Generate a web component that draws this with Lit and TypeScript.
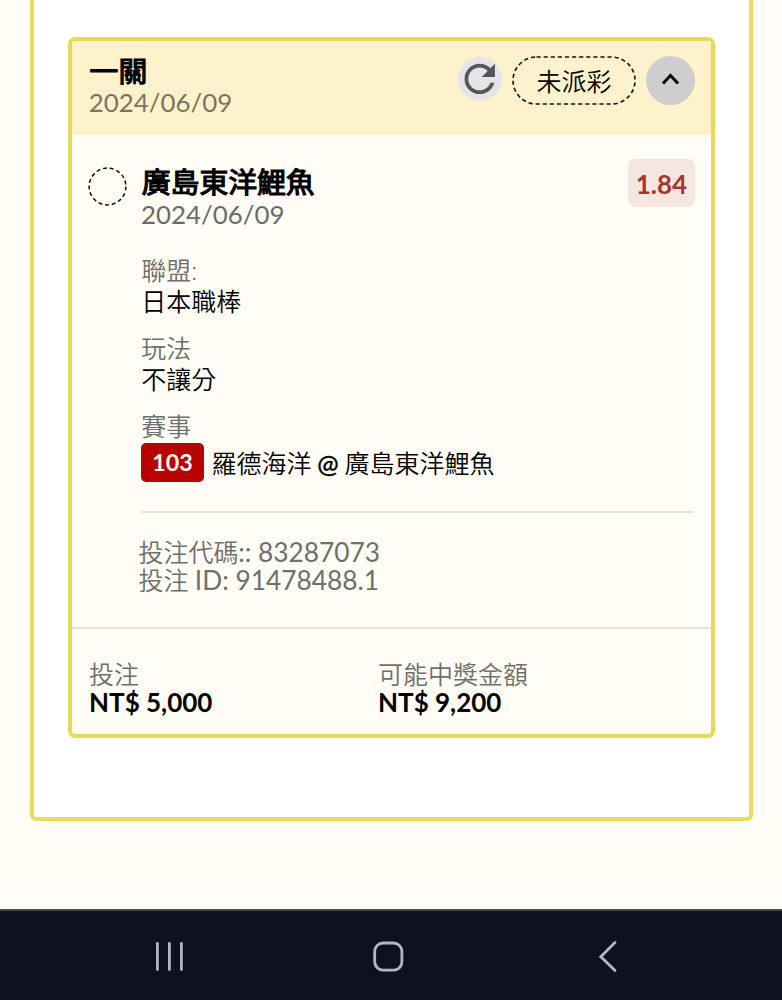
import { LitElement, html, css } from "lit";
import { customElement } from "lit/decorators.js";

@customElement("app-root")
export class AppRoot extends LitElement {
  static styles = css`
    :host {
      display: flex;
      flex-direction: column;
      width: 782px;
      height: 1000px;
      overflow: hidden;
      background: #fffdf5;
      color: #000;
      font-family: Lato, "Noto Sans CJK TC", sans-serif;
      font-size: 25px;
      font-weight: 350;
      white-space: nowrap;
    }
    * { box-sizing: border-box; }
    svg { display: block; }
    .main { height: 909px; padding: 0 29px 0 30px; }
    .outer {
      height: 821px;
      border: 4px solid #eadc5c;
      border-top: 0;
      border-radius: 0 0 6px 6px;
      background: #fff;
      padding: 37px 34px 0 34px;
    }
    .card {
      width: 647px;
      height: 701px;
      border: 4px solid #e8da55;
      border-radius: 7px;
      background: #fffdf5;
      display: flex;
      flex-direction: column;
      overflow: hidden;
    }
    .head {
      height: 94px;
      flex: none;
      background: #fdf2cb;
      padding: 15px 16px 0 17.6px;
      display: flex;
      justify-content: space-between;
    }
    .strong { font-size: 28.8px; line-height: 31px; height: 31px; font-weight: 400; -webkit-text-stroke: 1.2px #000; }
    .head .strong { line-height: 30px; }
    .date { font-size: 25.9px; line-height: 31px; height: 31px; font-weight: 400; color: #6b6b6b; margin-left: -0.8px; }
    .head .date { color: #7d745c; }
    .num { font-size: 26.3px; font-weight: 400; white-space: pre; }
    .actions { display: flex; }
    .refresh {
      width: 44px; height: 44px; margin: 1px 10.5px 0 0;
      border-radius: 50%; background: #e3e5e7;
    }
    .pill { width: 124px; height: 49px; margin-right: 10px; display: grid; place-items: start center; line-height: 50px; }
    .pill > * { grid-area: 1 / 1; }
    .toggle { width: 49px; height: 49px; border-radius: 50%; background: #cfcdce; }
    .body { height: 492px; flex: none; padding: 24px 16px 0 16px; display: flex; }
    .ring { width: 39px; height: 39px; margin: 7.5px 14px 0 0; }
    .detail { flex: 1; }
    .top { display: flex; justify-content: space-between; height: 96px; }
    .top .names { padding: 8px 0 0 0.8px; }
    .names .date { line-height: 33px; }
    .odds {
      width: 67px; height: 48px; border-radius: 7px; background: #f6e6e0;
      color: #a8352b; font-weight: 700; font-size: 26px; line-height: 50px; text-align: center;
    }
    .field { height: 78px; }
    .label, .value { height: 31px; line-height: 31px; }
    .field .label, .field .value { padding-left: 0.3px; }
    .label { color: #6f6f6b; }
    .match { display: flex; align-items: center; height: 39px; margin-top: 1px; }
    .field.last { height: 102px; border-bottom: 2px solid #e4e2dc; margin-right: 2px; }
    .tag {
      width: 63px; height: 39px; border-radius: 5px; background: #b70303; color: #fff0ec;
      font-weight: 700; font-size: 23.3px; line-height: 39px; text-align: center; margin-right: 7.5px;
    }
    .teams { display: flex; gap: 5.8px; line-height: 40px; }
    .at { font-weight: 500; font-size: 25.5px; -webkit-text-stroke: 0.3px #000; }
    .codes { margin: 25px 0 0 -2.4px; color: #6f6f6b; }
    .codes div { height: 28px; line-height: 29px; }
    .codes .num { margin-left: -0.5px; }
    .foot { flex: 1; border-top: 2px solid #e2e1db; padding: 31px 17px 0 17px; display: flex; }
    .foot .col { width: 289px; }
    .foot .label, .foot .amount { height: 28px; line-height: 28px; }
    .foot .amount { font-weight: 700; font-size: 26px; }
    .nav { height: 91px; border-top: 2px solid #474953; background: #0f121e; }
  `;

  private field(label: string, value: string) {
    return html`<div class="field">
      <div class="label">${label}</div>
      <div class="value">${value}</div>
    </div>`;
  }

  render() {
    return html`
      <div class="main">
        <div class="outer">
          <div class="card">
            <div class="head">
              <div>
                <div class="strong">一關</div>
                <div class="date">2024/06/09</div>
              </div>
              <div class="actions">
                <div class="refresh">
                  <svg width="44" height="44" viewBox="0 0 44 44">
                    <path
                      transform="translate(-1.1 -0.9) scale(1.9)"
                      fill="#555659"
                      d="M17.65 6.35C16.2 4.9 14.21 4 12 4c-4.42 0-7.99 3.58-7.99 8s3.57 8 7.99 8c3.73 0 6.84-2.55 7.73-6h-2.08c-.82 2.33-3.04 4-5.65 4-3.31 0-6-2.69-6-6s2.69-6 6-6c1.66 0 3.14.69 4.22 1.78L13 11h7V4l-2.35 2.35z"
                    />
                  </svg>
                </div>
                <div class="pill">
                  <svg width="124" height="49">
                    <rect x="1" y="1" width="122" height="47" rx="23.5" fill="none" stroke="#17150f" stroke-width="1.6" stroke-dasharray="4.2 2.9" />
                  </svg>
                  <span>未派彩</span>
                </div>
                <div class="toggle">
                  <svg width="49" height="49" viewBox="0 0 49 49">
                    <path d="M17 27.5L24.5 19.5L32 27.5" fill="none" stroke="#0b0b0b" stroke-width="3" />
                  </svg>
                </div>
              </div>
            </div>
            <div class="body">
              <svg class="ring" viewBox="0 0 39 39">
                <circle cx="19.5" cy="19.5" r="18.4" fill="none" stroke="#111" stroke-width="1.5" stroke-dasharray="4 2.8" />
              </svg>
              <div class="detail">
                <div class="top">
                  <div class="names">
                    <div class="strong">廣島東洋鯉魚</div>
                    <div class="date">2024/06/09</div>
                  </div>
                  <div class="odds">1.84</div>
                </div>
                ${this.field("聯盟:", "日本職棒")}
                ${this.field("玩法", "不讓分")}
                <div class="field last">
                  <div class="label">賽事</div>
                  <div class="match">
                    <span class="tag">103</span>
                    <span class="teams"><span>羅德海洋</span><span class="at">@</span><span>廣島東洋鯉魚</span></span>
                  </div>
                </div>
                <div class="codes">
                  <div>投注代碼<span class="num">:: 83287073</span></div>
                  <div>投注<span class="num"> ID: 91478488.1</span></div>
                </div>
              </div>
            </div>
            <div class="foot">
              <div class="col">
                <div class="label">投注</div>
                <div class="amount">NT$ 5,000</div>
              </div>
              <div class="col">
                <div class="label">可能中獎金額</div>
                <div class="amount">NT$ 9,200</div>
              </div>
            </div>
          </div>
        </div>
      </div>
      <div class="nav">
        <svg width="782" height="89" viewBox="0 911 782 89" fill="none" stroke="#b4b7c3" stroke-width="2.8" stroke-linecap="round">
          <path d="M157.4 943.3V969.5M169.4 943.3V969.5M181.4 943.3V969.5" />
          <rect x="374.7" y="943" width="27.2" height="27.2" rx="8.5" />
          <path d="M615 942.5L600.8 956.7L615 970.5" />
        </svg>
      </div>
    `;
  }
}
